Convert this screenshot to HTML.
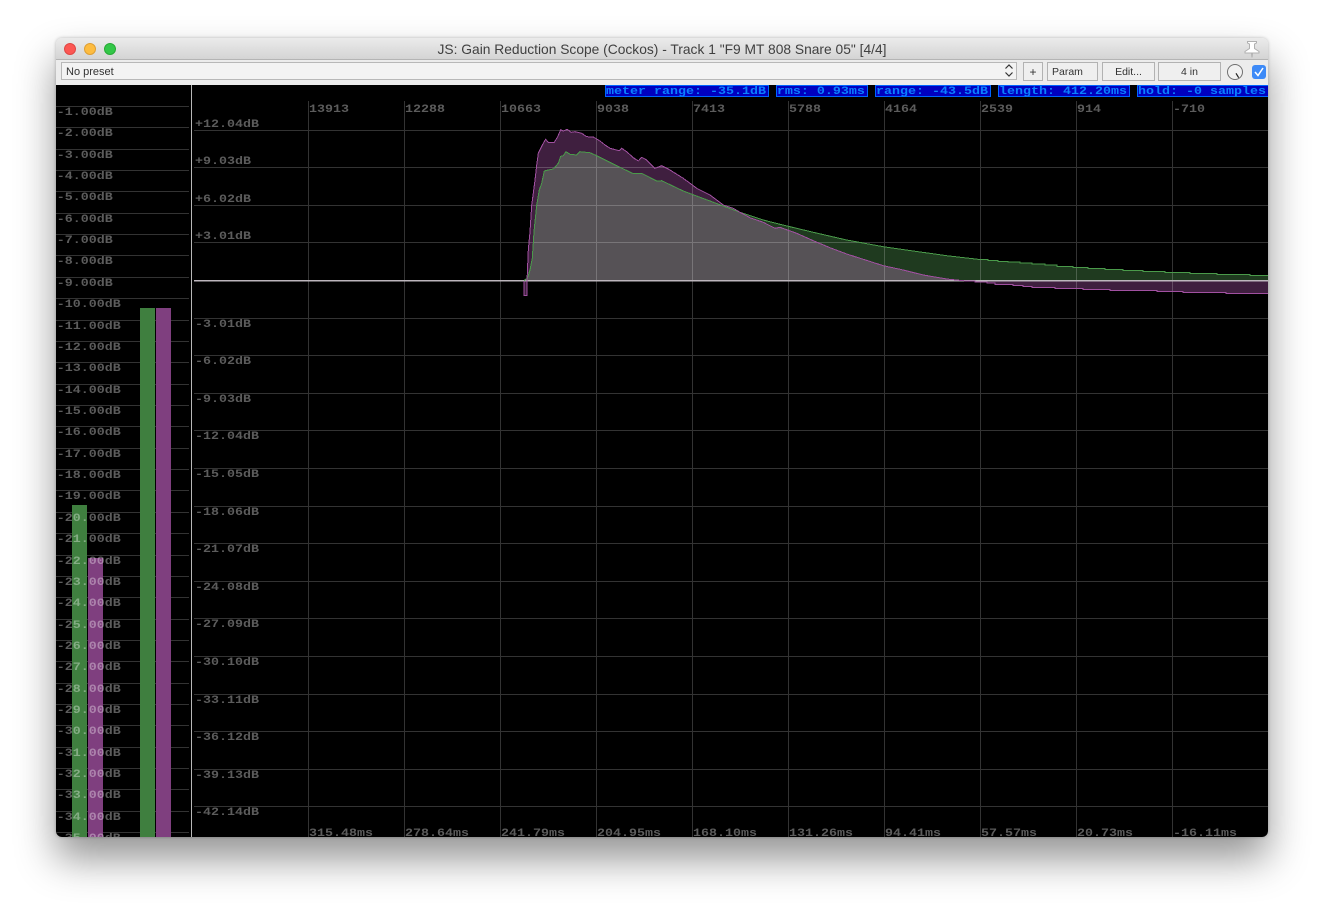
<!DOCTYPE html>
<html>
<head>
<meta charset="utf-8">
<style>
html,body{margin:0;padding:0;width:1324px;height:911px;background:#fff;overflow:hidden}
#win{position:absolute;left:56px;top:38px;width:1212px;height:799px;border-radius:6px;overflow:hidden;background:#ececec;font-family:"Liberation Sans",sans-serif}
#shadow{position:absolute;left:56px;top:38px;width:1212px;height:799px;border-radius:6px;box-shadow:0 22px 40px rgba(0,0,0,.42),0 0 3px rgba(0,0,0,.25)}
#title{position:absolute;left:0;top:0;width:1212px;height:21px;background:linear-gradient(#ebebeb,#d4d4d4);border-bottom:1px solid #b4b4b4;text-align:center;font-size:13.8px;line-height:23px;color:#404040;white-space:nowrap}
.tl{position:absolute;top:5px;width:12px;height:12px;border-radius:50%;box-sizing:border-box}
.b{position:absolute;top:24px;height:19px;box-sizing:border-box;border:1px solid #b2b2b2;background:#efefef;font-size:10.5px;line-height:18px;color:#333;text-align:center}
#scope{position:absolute;left:0;top:47px;display:block}
#scope text{font-family:"Liberation Mono",monospace;font-size:11px;font-weight:bold;fill:#5c5c5c}
#scope .s text{fill:#0a80ff}
</style>
</head>
<body>
<div id="shadow"></div>
<div id="win">
  <div id="title">JS: Gain Reduction Scope (Cockos) - Track 1 "F9 MT 808 Snare 05" [4/4]</div>
  <div class="tl" style="left:8px;background:#fc5753;border:1px solid #df4744"></div>
  <div class="tl" style="left:28px;background:#fdbc40;border:1px solid #de9f34"></div>
  <div class="tl" style="left:48px;background:#33c748;border:1px solid #27aa35"></div>
  <svg style="position:absolute;left:1187px;top:1px" width="18" height="20" viewBox="0 0 18 20">
    <path d="M4.500 2.500H13.500V4L11.500 5V9.500L16 12.500V14H9.500L9 18.500L8.500 14H2V12.500L6.500 9.500V5L4.500 4Z" fill="#fff" stroke="#b0b0b0" stroke-width="1"/>
  </svg>
  <div class="b" style="left:5px;width:956px;height:18px;text-align:left;padding-left:4px;background:#f3f3f3;font-size:11px;line-height:18px;border-color:#b8b8b8">No preset</div>
  <svg style="position:absolute;left:947px;top:25px" width="12" height="15" viewBox="0 0 12 15">
    <path d="M2.500 5.500L6 2L9.500 5.500M2.500 9.500L6 13L9.500 9.500" fill="none" stroke="#333" stroke-width="1.200"/>
  </svg>
  <div class="b" style="left:967px;width:20px;font-size:12px">+</div>
  <div class="b" style="left:991px;width:51px;text-align:left;padding-left:4px">Param</div>
  <div class="b" style="left:1046px;width:53px">Edit...</div>
  <div class="b" style="left:1102px;width:63px">4 in</div>
  <svg style="position:absolute;left:1170px;top:25px" width="18" height="18" viewBox="0 0 18 18">
    <circle cx="9" cy="9" r="7.500" fill="#f1f1f1" stroke="#707070" stroke-width="1"/>
    <path d="M10 10.300L12.700 14.700" stroke="#222" stroke-width="1.200"/>
  </svg>
  <svg style="position:absolute;left:1196px;top:27px" width="14" height="14" viewBox="0 0 14 14">
    <rect x="0" y="0" width="14" height="14" rx="3" fill="#3d8af7"/>
    <path d="M3 7L6 10.500L11 3" fill="none" stroke="#fff" stroke-width="1.500"/>
  </svg>

  <svg id="scope" width="1212" height="752" viewBox="56 85 1212 752" style="background:#000">
    <defs>
      <path id="pu" d="M524 281V295.500H527V281L528.300 250L530 231.700L531.700 205L533.300 193.300L535 180L536.700 165L538.300 153.300L540.700 148.300L543.300 143.300L545.700 139.300L548.300 142.300L554.300 142.300L557.700 136.700L560.700 129.700L563.300 131L567.300 129.300L571 132.300L575 131.700L581.700 133.300L586.700 136.700L593.300 137L600 141L605 145L610 148.300L619.300 150.700L621.700 148.300L626.700 151.700L633.300 157.700L638.300 161L641.700 157.300L646.700 160L655 168.300L661.700 165.700L668.300 169L683.300 178.300L696.700 188.300L710 195L723.300 205L733.300 208.300L740 212.300L750 217.700L763.300 222.300L775 228.300L780 227.300L796.700 233.300L813.300 240.700L830 247.700L846.700 254L863.300 259.300L883.300 265.700L903.300 270L923.300 275L946.700 279L966.700 281H975V282H987V283H995V284.300H1013V285.300H1023V286.300H1032V287.300H1055V288.300H1083V289.300H1110V290.500H1157V291.500H1183V292.500H1226V293.500H1268"/>
      <path id="gr" d="M524 280.500L527.300 278.300L530 270L532.300 258.300L534 231.700L536.700 205L539.300 190L541.700 183.300L544.300 171L548.300 170L553.300 169L558.300 163.300L560.700 156.300L563.300 155.700L566 151.700L570 154.300L576.700 155L580 151.700L590 152.700L596.700 155.700L616.700 165.700L633.300 173.700L641.700 173.300L656.700 181L661.700 180.700L683.300 191L710 201L740 212.300L763.300 220L780 224.300L813.300 232.300L846.700 240L883.300 246.700L913.300 251L946.700 255.700L978 259.300H988V260.300H998V261.300H1008V262H1020V263H1032V264H1045V265H1057V266.500H1073V267.500H1088V268.500H1105V269.500H1123V270.500H1143V271.500H1165V272.500H1190V273.500H1217V274.500H1250V275.500H1268"/>
    </defs>
    <g stroke="#333" stroke-width="1" shape-rendering="crispEdges">
      <path d="M56 106.500H189M56 127.500H189M56 149.500H189M56 170.500H189M56 191.500H189M56 213.500H189M56 234.500H189M56 255.500H189M56 277.500H189M56 298.500H189M56 320.500H189M56 341.500H189M56 362.500H189M56 384.500H189M56 405.500H189M56 426.500H189M56 448.500H189M56 469.500H189M56 490.500H189M56 512.500H189M56 533.500H189M56 555.500H189M56 576.500H189M56 597.500H189M56 619.500H189M56 640.500H189M56 661.500H189M56 683.500H189M56 704.500H189M56 725.500H189M56 747.500H189M56 768.500H189M56 789.500H189M56 811.500H189M56 832.500H189"/>
      <path d="M194 130.500H1268M194 167.500H1268M194 205.500H1268M194 242.500H1268M194 318.500H1268M194 355.500H1268M194 393.500H1268M194 430.500H1268M194 468.500H1268M194 506.500H1268M194 543.500H1268M194 581.500H1268M194 618.500H1268M194 656.500H1268M194 694.500H1268M194 731.500H1268M194 769.500H1268M194 806.500H1268"/>
      <path d="M308.500 101V837M404.500 101V837M500.500 101V837M596.500 101V837M692.500 101V837M788.500 101V837M884.500 101V837M980.500 101V837M1076.500 101V837M1172.500 101V837"/>
    </g>
    <rect x="191" y="85" width="1" height="752" fill="#b8b8b8"/>

    <g shape-rendering="crispEdges">
      <rect x="72" y="505" width="15" height="332" fill="#3f7f3f"/>
      <rect x="88" y="558" width="15" height="279" fill="#7f3f7f"/>
      <rect x="140" y="308" width="15" height="529" fill="#3f7f3f"/>
      <rect x="156" y="308" width="15" height="529" fill="#7f3f7f"/>
    </g>

    <path fill="#3f1f3f" style="mix-blend-mode:screen" d="M524 281V295.500H527V281L528.300 250L530 231.700L531.700 205L533.300 193.300L535 180L536.700 165L538.300 153.300L540.700 148.300L543.300 143.300L545.700 139.300L548.300 142.300L554.300 142.300L557.700 136.700L560.700 129.700L563.300 131L567.300 129.300L571 132.300L575 131.700L581.700 133.300L586.700 136.700L593.300 137L600 141L605 145L610 148.300L619.300 150.700L621.700 148.300L626.700 151.700L633.300 157.700L638.300 161L641.700 157.300L646.700 160L655 168.300L661.700 165.700L668.300 169L683.300 178.300L696.700 188.300L710 195L723.300 205L733.300 208.300L740 212.300L750 217.700L763.300 222.300L775 228.300L780 227.300L796.700 233.300L813.300 240.700L830 247.700L846.700 254L863.300 259.300L883.300 265.700L903.300 270L923.300 275L946.700 279L966.700 281H975V282H987V283H995V284.300H1013V285.300H1023V286.300H1032V287.300H1055V288.300H1083V289.300H1110V290.500H1157V291.500H1183V292.500H1226V293.500H1268V280.500H527Z"/>
    <path fill="#1f3a1f" style="mix-blend-mode:screen" d="M524 280.500L527.300 278.300L530 270L532.300 258.300L534 231.700L536.700 205L539.300 190L541.700 183.300L544.300 171L548.300 170L553.300 169L558.300 163.300L560.700 156.300L563.300 155.700L566 151.700L570 154.300L576.700 155L580 151.700L590 152.700L596.700 155.700L616.700 165.700L633.300 173.700L641.700 173.300L656.700 181L661.700 180.700L683.300 191L710 201L740 212.300L763.300 220L780 224.300L813.300 232.300L846.700 240L883.300 246.700L913.300 251L946.700 255.700L978 259.300H988V260.300H998V261.300H1008V262H1020V263H1032V264H1045V265H1057V266.500H1073V267.500H1088V268.500H1105V269.500H1123V270.500H1143V271.500H1165V272.500H1190V273.500H1217V274.500H1250V275.500H1268V280.500H524Z"/>
    <rect x="194" y="280" width="1074" height="1.500" fill="#bdb6bd"/>
    <use href="#gr" fill="none" stroke="#4a9a4a" stroke-width="1" shape-rendering="crispEdges"/>
    <use href="#pu" fill="none" stroke="#a050a0" stroke-width="1" shape-rendering="crispEdges"/>

    <g transform="scale(1.212 1)" style="mix-blend-mode:screen">
      <text x="46.800" y="115">-1.00dB</text><text x="46.800" y="136">-2.00dB</text><text x="46.800" y="158">-3.00dB</text><text x="46.800" y="179">-4.00dB</text><text x="46.800" y="200">-5.00dB</text><text x="46.800" y="222">-6.00dB</text><text x="46.800" y="243">-7.00dB</text><text x="46.800" y="264">-8.00dB</text><text x="46.800" y="286">-9.00dB</text><text x="46.800" y="307">-10.00dB</text><text x="46.800" y="329">-11.00dB</text><text x="46.800" y="350">-12.00dB</text><text x="46.800" y="371">-13.00dB</text><text x="46.800" y="393">-14.00dB</text><text x="46.800" y="414">-15.00dB</text><text x="46.800" y="435">-16.00dB</text><text x="46.800" y="457">-17.00dB</text><text x="46.800" y="478">-18.00dB</text><text x="46.800" y="499">-19.00dB</text><text x="46.800" y="521">-20.00dB</text><text x="46.800" y="542">-21.00dB</text><text x="46.800" y="564">-22.00dB</text><text x="46.800" y="585">-23.00dB</text><text x="46.800" y="606">-24.00dB</text><text x="46.800" y="628">-25.00dB</text><text x="46.800" y="649">-26.00dB</text><text x="46.800" y="670">-27.00dB</text><text x="46.800" y="692">-28.00dB</text><text x="46.800" y="713">-29.00dB</text><text x="46.800" y="734">-30.00dB</text><text x="46.800" y="756">-31.00dB</text><text x="46.800" y="777">-32.00dB</text><text x="46.800" y="798">-33.00dB</text><text x="46.800" y="820">-34.00dB</text><text x="46.800" y="841">-35.00dB</text>
    </g>
    <g transform="scale(1.212 1)">
      <text x="160.900" y="127">+12.04dB</text><text x="160.900" y="164">+9.03dB</text><text x="160.900" y="202">+6.02dB</text><text x="160.900" y="239">+3.01dB</text>
      <text x="160.900" y="327">-3.01dB</text><text x="160.900" y="364">-6.02dB</text><text x="160.900" y="402">-9.03dB</text><text x="160.900" y="439">-12.04dB</text><text x="160.900" y="477">-15.05dB</text><text x="160.900" y="515">-18.06dB</text><text x="160.900" y="552">-21.07dB</text><text x="160.900" y="590">-24.08dB</text><text x="160.900" y="627">-27.09dB</text><text x="160.900" y="665">-30.10dB</text><text x="160.900" y="703">-33.11dB</text><text x="160.900" y="740">-36.12dB</text><text x="160.900" y="778">-39.13dB</text><text x="160.900" y="815">-42.14dB</text>

      <text x="255" y="112">13913</text><text x="334.200" y="112">12288</text><text x="413.400" y="112">10663</text><text x="492.600" y="112">9038</text><text x="571.800" y="112">7413</text><text x="651" y="112">5788</text><text x="730.200" y="112">4164</text><text x="809.400" y="112">2539</text><text x="888.600" y="112">914</text><text x="967.800" y="112">-710</text>

      <text x="255" y="836">315.48ms</text><text x="334.200" y="836">278.64ms</text><text x="413.400" y="836">241.79ms</text><text x="492.600" y="836">204.95ms</text><text x="571.800" y="836">168.10ms</text><text x="651" y="836">131.26ms</text><text x="730.200" y="836">94.41ms</text><text x="809.400" y="836">57.57ms</text><text x="888.600" y="836">20.73ms</text><text x="967.800" y="836">-16.11ms</text>
    </g>

    <g shape-rendering="crispEdges" fill="#0000c0" stroke="#0066ff" stroke-width="1">
      <rect x="605.500" y="85.500" width="163" height="11"/>
      <rect x="776.500" y="85.500" width="91" height="11"/>
      <rect x="875.500" y="85.500" width="115" height="11"/>
      <rect x="998.500" y="85.500" width="131" height="11"/>
      <rect x="1137.500" y="85.500" width="131" height="11"/>
    </g>
    <g class="s" transform="scale(1.212 1)">
      <text x="500" y="94">meter range: -35.1dB</text>
      <text x="641" y="94">rms: 0.93ms</text>
      <text x="722.800" y="94">range: -43.5dB</text>
      <text x="824.300" y="94">length: 412.20ms</text>
      <text x="939" y="94">hold: -0 samples</text>
    </g>
  </svg>
</div>
</body>
</html>
